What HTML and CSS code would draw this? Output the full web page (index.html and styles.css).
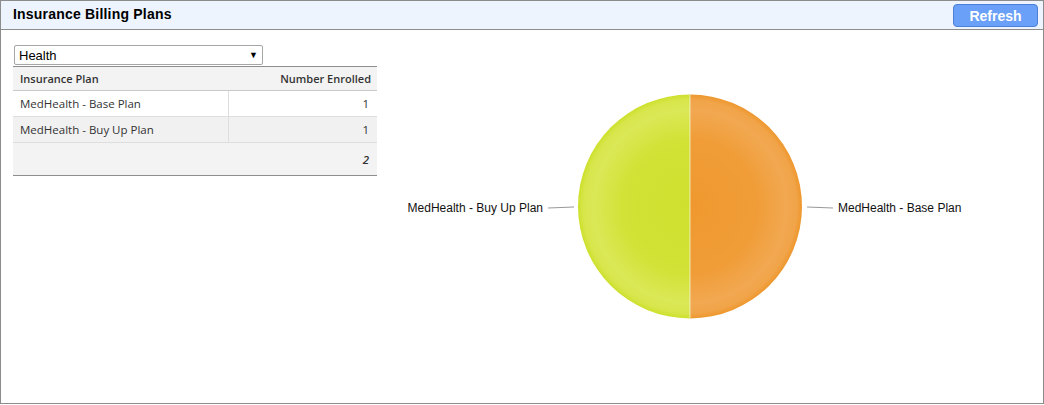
FILE: index.html
```html
<!DOCTYPE html>
<html>
<head>
<meta charset="utf-8">
<link rel="stylesheet" href="styles.css">
</head>
<body>
<div class="frame">
  <div class="header">
    <div class="title">Insurance Billing Plans</div>
    <button class="refresh">Refresh</button>
  </div>
  <div class="content">
    <div class="left">
      <div class="select"><span>Health</span><span class="arrow">&#9660;</span></div>
      <table class="grid">
        <thead>
          <tr><th class="c1">Insurance Plan</th><th class="c2">Number Enrolled</th></tr>
        </thead>
        <tbody>
          <tr><td class="c1">MedHealth - Base Plan</td><td class="c2">1</td></tr>
          <tr class="alt"><td class="c1">MedHealth - Buy Up Plan</td><td class="c2">1</td></tr>
        </tbody>
        <tfoot>
          <tr><td class="c1"></td><td class="c2 total">2</td></tr>
        </tfoot>
      </table>
    </div>
    <div class="chart">
      <svg width="666" height="373" viewBox="0 0 666 373">
        <defs>
          <radialGradient id="gGreen" gradientUnits="userSpaceOnUse" cx="313" cy="176.5" r="112">
            <stop offset="0" stop-color="#cfe02f"/>
            <stop offset="0.6" stop-color="#d2e236"/>
            <stop offset="0.86" stop-color="#dbe857"/>
            <stop offset="0.95" stop-color="#d8e64c"/>
            <stop offset="1" stop-color="#cde02b"/>
          </radialGradient>
          <radialGradient id="gOrange" gradientUnits="userSpaceOnUse" cx="313" cy="176.5" r="112">
            <stop offset="0" stop-color="#ef982f"/>
            <stop offset="0.6" stop-color="#f09d38"/>
            <stop offset="0.86" stop-color="#f2a851"/>
            <stop offset="0.95" stop-color="#f1a449"/>
            <stop offset="1" stop-color="#ee972d"/>
          </radialGradient>
        </defs>
        <path d="M313 64.5 A112 112 0 0 1 313 288.5 Z" fill="url(#gOrange)"/>
        <path d="M313 64.5 A112 112 0 0 0 313 288.5 Z" fill="url(#gGreen)"/>
        <line x1="313" y1="64.5" x2="313" y2="288.5" stroke="#f4f4d8" stroke-width="0.8"/>
        <line x1="171" y1="178" x2="197" y2="177" stroke="#999" stroke-width="1"/>
        <line x1="430" y1="177" x2="456" y2="178" stroke="#999" stroke-width="1"/>
        <text class="lbl" x="166" y="182" text-anchor="end">MedHealth - Buy Up Plan</text>
        <text class="lbl" x="461" y="182">MedHealth - Base Plan</text>
      </svg>
    </div>
  </div>
</div>
</body>
</html>
```
FILE: styles.css
```css
html, body {
  margin: 0;
  padding: 0;
  background: #fff;
}
.frame {
  width: 1044px;
  height: 404px;
  box-sizing: border-box;
  border: 1px solid #8c8c8c;
  display: flex;
  flex-direction: column;
  font-family: "Liberation Sans", Arial, sans-serif;
}
.header {
  height: 28px;
  background: #edf4fe;
  border-bottom: 1px solid #8c8c8c;
  display: flex;
  align-items: center;
  justify-content: space-between;
  padding: 0 5px 0 12px;
}
.title {
  font-weight: bold;
  font-size: 14px;
  letter-spacing: 0.2px;
  color: #000;
  margin-top: -2px;
}
.refresh {
  width: 85px;
  height: 23px;
  margin-top: 1px;
  background: #6aa0f7;
  border: 1px solid #4c7fd8;
  border-radius: 4px;
  color: #fff;
  font-family: "Liberation Sans", Arial, sans-serif;
  font-weight: bold;
  font-size: 14px;
  padding: 0;
}
.content {
  flex: 1;
  display: flex;
}
.left {
  width: 364px;
  padding: 15px 0 0 12px;
}
.select {
  margin-left: 1px;
  width: 249px;
  height: 20px;
  box-sizing: border-box;
  border: 1px solid #a6a6a6;
  border-radius: 2px;
  display: flex;
  justify-content: space-between;
  align-items: center;
  padding: 0 4px 0 4px;
  font-size: 13px;
  color: #000;
}
.arrow {
  font-size: 9px;
}
.grid {
  width: 364px;
  margin-top: 1px;
  border-collapse: collapse;
  font-family: "Open Sans", "Noto Sans", sans-serif;
  font-size: 11.5px;
  color: #333;
}
.grid th {
  background: #f3f3f3;
  border-top: 1px solid #8e8e8e;
  border-bottom: 1px solid #c8c8c8;
  height: 23px;
  font-weight: 600;
  font-size: 11px;
  padding: 0 6px 0 7px;
  color: #333;
}
.grid th.c1, .grid td.c1 {
  text-align: left;
}
.grid th.c2, .grid td.c2 {
  text-align: right;
}
.grid td {
  height: 25px;
  padding: 0 8px 0 7px;
  border-bottom: 1px solid #dedede;
}
.grid tbody td.c1 {
  border-right: 1px solid #dedede;
  width: 200px;
}
.grid tr.alt td {
  background: #f1f1f1;
}
.grid tfoot td {
  background: #f3f3f3;
  height: 32px;
  border-top: 1px solid #9a9a9a;
  border-bottom: 1px solid #8e8e8e;
}
.grid td.total {
  font-weight: 600;
  font-style: italic;
}
.chart {
  flex: 1;
}
.chart svg {
  display: block;
}
.lbl {
  font-family: "Liberation Sans", Arial, sans-serif;
  font-size: 12px;
  fill: #111;
}
```
